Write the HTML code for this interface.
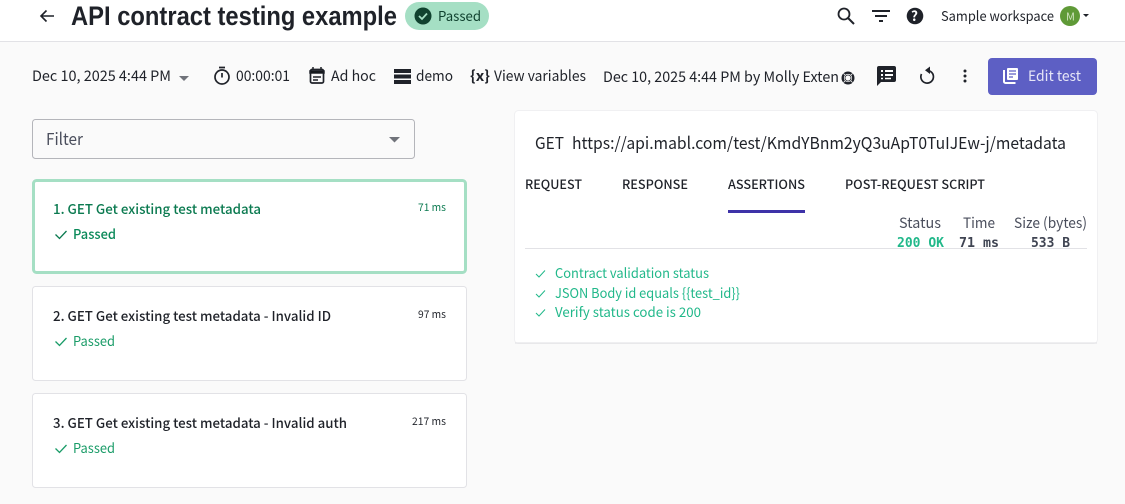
<!DOCTYPE html>
<html lang="en"><head><meta charset="utf-8"><title>API contract testing example</title>
<style>
html,body{margin:0;padding:0;width:1125px;height:504px;overflow:hidden;background:#fafafa}
svg{display:block}
text{font-family:"Noto Sans CJK JP","Liberation Sans",sans-serif;fill:#1f2229}
.m{font-family:"DejaVu Sans Mono","Liberation Mono",monospace;font-weight:700}
</style></head><body>
<svg width="1125" height="504" viewBox="0 0 1125 504" xmlns="http://www.w3.org/2000/svg">
<rect width="1125" height="504" fill="#fafafa"/>
<rect width="1125" height="41" fill="#fff"/>
<rect y="41" width="1125" height="1" fill="#e2e2e6"/>
<path d="M54 16H41M46.500 10.500L41 16L46.500 21.500" fill="none" stroke="#1f2229" stroke-width="1.600"/>
<text x="71" y="25" font-size="26.500" font-weight="700" textLength="326" lengthAdjust="spacingAndGlyphs" style="font-family:'Liberation Sans',sans-serif">API contract testing example</text>
<rect x="405" y="2" width="84" height="28" rx="14" fill="#a5dfc4"/>
<circle cx="423" cy="16" r="8.500" fill="#10422f"/>
<path d="M419 16l3 3 5-5.500" fill="none" stroke="#a5dfc4" stroke-width="1.800"/>
<text x="438" y="21" font-size="13.500" textLength="43" lengthAdjust="spacingAndGlyphs" style="fill:#10422f">Passed</text>

<circle cx="844" cy="14" r="5.500" fill="none" stroke="#1f2229" stroke-width="1.800"/>
<path d="M848 18l6 6" stroke="#1f2229" stroke-width="2"/>
<path d="M872 11h18M875 16h12M879 21h4" stroke="#1f2229" stroke-width="2"/>
<circle cx="915" cy="16" r="8.300" fill="#1f2229"/>
<text x="911" y="21" font-size="13.500" font-weight="700" style="fill:#fff">?</text>
<text x="941" y="21" font-size="13.500" textLength="113" lengthAdjust="spacingAndGlyphs">Sample workspace</text>
<circle cx="1070" cy="16" r="10" fill="#5f9a37"/>
<text x="1066" y="20.500" font-size="11" style="fill:#cfe3bf">M</text>
<path d="M1083 14h6l-3 3z" fill="#1f2229"/>

<text x="32" y="81" font-size="14.500" textLength="139" lengthAdjust="spacingAndGlyphs">Dec 10, 2025 4:44 PM</text>
<path d="M179 76h10l-5 5z" fill="#70737a"/>
<circle cx="222" cy="77" r="7" fill="none" stroke="#1f2229" stroke-width="1.700"/>
<path d="M219 67.500h6M222 73v4.500" stroke="#1f2229" stroke-width="1.700"/>
<text x="236" y="81" font-size="14.500" textLength="54" lengthAdjust="spacingAndGlyphs">00:00:01</text>
<rect x="310.500" y="69.500" width="13" height="13.500" rx="1.500" fill="none" stroke="#1f2229" stroke-width="1.700"/>
<path d="M310 71h14v2h-14zM313 67v3M321 67v3M313 77h8M313 80h5" stroke="#1f2229" stroke-width="1.500"/>
<text x="331" y="81" font-size="14.500" textLength="45" lengthAdjust="spacingAndGlyphs">Ad hoc</text>
<path d="M394 69h17v4h-17zM394 74.500h17v4h-17zM394 80h17v4h-17z" fill="#1f2229"/>
<text x="416" y="81" font-size="14.500" textLength="37" lengthAdjust="spacingAndGlyphs">demo</text>
<text x="470" y="81" font-size="14.500" font-weight="700" textLength="20" lengthAdjust="spacingAndGlyphs">{x}</text>
<text x="494" y="81" font-size="14.500" textLength="92" lengthAdjust="spacingAndGlyphs">View variables</text>
<text x="603" y="82" font-size="14.500" textLength="236" lengthAdjust="spacingAndGlyphs">Dec 10, 2025 4:44 PM by Molly Exten</text>
<circle cx="848" cy="78" r="5.300" fill="none" stroke="#1f2229" stroke-width="2.400"/>
<path d="M846 76l-2.500-2.500M850 76l2.500-2.500M846 80l-2.500 2.500M850 80l2.500 2.500" stroke="#fafafa" stroke-width=".8"/>
<circle cx="848" cy="78" r="3" fill="#fafafa" stroke="#1f2229" stroke-width=".8"/>
<path d="M879 66h15a2 2 0 0 1 2 2v12a2 2 0 0 1-2 2h-13l-4 4v-18a2 2 0 0 1 2-2z" fill="#1f2229"/>
<path d="M881 70h2v2h-2zM885 70h8v2h-8zM881 74h2v2h-2zM885 74h8v2h-8z" fill="#fff"/>
<path d="M881 78.500h2M885 78.500h6" stroke="#fff" stroke-width="1.500"/>
<path d="M927 70.500a6.300 6.300 0 1 1-5.500 3.500" fill="none" stroke="#1f2229" stroke-width="1.700"/>
<path d="M930 66.500v7.500l-5-3.700z" fill="#1f2229"/>
<circle cx="965" cy="71" r="1.500" fill="#1f2229"/><circle cx="965" cy="76" r="1.500" fill="#1f2229"/><circle cx="965" cy="81" r="1.500" fill="#1f2229"/>
<rect x="988" y="58" width="109" height="37" rx="4" fill="#5d5fc4"/>
<path d="M1004 70v11.500a1.500 1.500 0 0 0 1.500 1.500h10" fill="none" stroke="#fff" stroke-width="2"/>
<rect x="1007" y="68" width="11" height="12" rx="1" fill="#fff"/>
<path d="M1009 71h7M1009 74h7M1009 77h4" stroke="#5d5fc4" stroke-width="1.200"/>
<text x="1028" y="81" font-size="14.500" textLength="53" lengthAdjust="spacingAndGlyphs" style="fill:#e6e6f7">Edit test</text>

<rect x="32.500" y="119.500" width="382" height="39" rx="3" fill="#fafafa" stroke="#b4b5ba"/>
<text x="46" y="145" font-size="16.500" textLength="37" lengthAdjust="spacingAndGlyphs" style="fill:#4a4e5c">Filter</text>
<path d="M389 137h11l-5.500 5.500z" fill="#70737a"/>

<rect x="33.500" y="180.500" width="432" height="92" rx="3" fill="#fff" stroke="#a5dfc4" stroke-width="3"/>
<text x="53" y="214" font-size="13.500" font-weight="500" textLength="208" lengthAdjust="spacingAndGlyphs" style="fill:#0b7a50">1. GET Get existing test metadata</text>
<text x="418" y="211" font-size="10.500" textLength="28" lengthAdjust="spacingAndGlyphs" style="fill:#0b7a50">71 ms</text>
<path d="M55.500 234.500l4 4 7-7.500" fill="none" stroke="#0b7a50" stroke-width="1.300"/>
<text x="73" y="239" font-size="13.500" font-weight="500" textLength="43" lengthAdjust="spacingAndGlyphs" style="fill:#0b8a5a">Passed</text>

<rect x="32.500" y="286.500" width="434" height="94" rx="3" fill="#fff" stroke="#e2e2e6"/>
<text x="53" y="321" font-size="13.500" font-weight="500" textLength="278" lengthAdjust="spacingAndGlyphs">2. GET Get existing test metadata - Invalid ID</text>
<text x="418" y="318" font-size="10.500" textLength="28" lengthAdjust="spacingAndGlyphs">97 ms</text>
<path d="M55.500 341.500l4 4 7-7.500" fill="none" stroke="#1a9c68" stroke-width="1.300"/>
<text x="73" y="346" font-size="13.500" textLength="42" lengthAdjust="spacingAndGlyphs" style="fill:#1a9c68">Passed</text>

<rect x="32.500" y="393.500" width="434" height="94" rx="3" fill="#fff" stroke="#e2e2e6"/>
<text x="53" y="428" font-size="13.500" font-weight="500" textLength="294" lengthAdjust="spacingAndGlyphs">3. GET Get existing test metadata - Invalid auth</text>
<text x="412" y="425" font-size="10.500" textLength="34" lengthAdjust="spacingAndGlyphs">217 ms</text>
<path d="M55.500 448.500l4 4 7-7.500" fill="none" stroke="#1a9c68" stroke-width="1.300"/>
<text x="73" y="453" font-size="13.500" textLength="42" lengthAdjust="spacingAndGlyphs" style="fill:#1a9c68">Passed</text>

<rect x="514.500" y="110.500" width="583" height="233" rx="4" fill="#fff" stroke="#f0f0f2"/>
<rect x="515" y="342.500" width="582" height="1" fill="#dfdfe3"/>
<text x="535" y="149" font-size="16.500" textLength="29" lengthAdjust="spacingAndGlyphs">GET</text>
<text x="572" y="149" font-size="16.500" textLength="494" lengthAdjust="spacingAndGlyphs">https://api.mabl.com/test/KmdYBnm2yQ3uApT0TuIJEw-j/metadata</text>
<text x="525" y="189" font-size="12.500" font-weight="500" textLength="57" lengthAdjust="spacingAndGlyphs">REQUEST</text>
<text x="622" y="189" font-size="12.500" font-weight="500" textLength="66" lengthAdjust="spacingAndGlyphs">RESPONSE</text>
<text x="728" y="189" font-size="12.500" font-weight="500" textLength="77" lengthAdjust="spacingAndGlyphs">ASSERTIONS</text>
<text x="845" y="189" font-size="12.500" font-weight="500" textLength="140" lengthAdjust="spacingAndGlyphs">POST-REQUEST SCRIPT</text>
<rect x="728" y="210" width="77" height="3" fill="#3e32a8"/>
<text x="899" y="228" font-size="14.500" textLength="42" lengthAdjust="spacingAndGlyphs" style="fill:#4a4e5c">Status</text>
<text x="963" y="228" font-size="14.500" textLength="32" lengthAdjust="spacingAndGlyphs" style="fill:#4a4e5c">Time</text>
<text x="1014" y="228" font-size="14.500" textLength="73" lengthAdjust="spacingAndGlyphs" style="fill:#4a4e5c">Size (bytes)</text>
<text class="m" x="897" y="247" font-size="13" textLength="47" lengthAdjust="spacingAndGlyphs" style="fill:#21b88a">200 OK</text>
<text class="m" x="959" y="247" font-size="13" textLength="40" lengthAdjust="spacingAndGlyphs" style="fill:#3f4452">71 ms</text>
<text class="m" x="1031" y="247" font-size="13" textLength="39" lengthAdjust="spacingAndGlyphs" style="fill:#3f4452">533 B</text>
<rect x="525" y="248" width="562" height="1" fill="#e2e2e6"/>
<path d="M536 274l3 3 6-6.500" fill="none" stroke="#21b88a" stroke-width="1"/>
<text x="555" y="278" font-size="13.500" textLength="154" lengthAdjust="spacingAndGlyphs" style="fill:#21b88a">Contract validation status</text>
<path d="M536 294l3 3 6-6.500" fill="none" stroke="#21b88a" stroke-width="1"/>
<text x="555" y="298" font-size="13.500" textLength="185" lengthAdjust="spacingAndGlyphs" style="fill:#21b88a">JSON Body id equals {{test_id}}</text>
<path d="M536 313l3 3 6-6.500" fill="none" stroke="#21b88a" stroke-width="1"/>
<text x="555" y="317" font-size="13.500" textLength="146" lengthAdjust="spacingAndGlyphs" style="fill:#21b88a">Verify status code is 200</text>
</svg>
</body></html>
